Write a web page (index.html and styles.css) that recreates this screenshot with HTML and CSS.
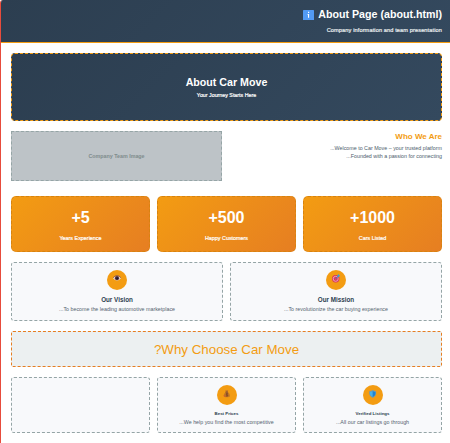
FILE: index.html
```html
<!DOCTYPE html>
<html lang="en">
<head>
<meta charset="utf-8">
<title>About Page</title>
<link rel="stylesheet" href="styles.css">
</head>
<body>
<div class="page">
  <header class="header">
    <h1 class="title">
      <svg class="info" viewBox="0 0 11 10"><rect width="11" height="10" rx=".6" fill="#529af3"/><path d="M5 1.7h1.2v1.2H5zM4.5 4h1.6v3.7H5V4.8h-.5z" fill="#fff"/></svg>
      <span>About Page (about.html)</span>
    </h1>
    <p class="subtitle">Company information and team presentation</p>
  </header>
  <main class="content">
    <section class="hero">
      <h2 class="hero-title">About Car Move</h2>
      <p class="hero-text">Your Journey Starts Here</p>
    </section>
    <section class="who">
      <div class="image">Company Team Image</div>
      <div class="who-copy">
        <h3 class="who-title">Who We Are</h3>
        <p>...Welcome to Car Move – your trusted platform</p>
        <p>...Founded with a passion for connecting</p>
      </div>
    </section>
    <section class="stats">
      <div class="stat"><b class="number">+5</b><span class="label">Years Experience</span></div>
      <div class="stat"><b class="number">+500</b><span class="label">Happy Customers</span></div>
      <div class="stat"><b class="number">+1000</b><span class="label">Cars Listed</span></div>
    </section>
    <section class="pair">
      <article class="card">
        <div class="circle"><svg viewBox="0 0 20 20"><path d="M6 8.3Q10 3.2 14 8.3Q10 12.7 6 8.3" fill="#e8e1e5"/><path d="M6.1 7.7Q10 3.2 14 7.7" fill="none" stroke="#875048" stroke-width=".7"/><circle cx="10" cy="8.2" r="2.1" fill="#572f3c"/><circle cx="10.2" cy="8.3" r="1" fill="#171b2c"/></svg></div>
        <h4>Our Vision</h4>
        <p>...To become the leading automotive marketplace</p>
      </article>
      <article class="card">
        <div class="circle"><svg viewBox="0 0 20 20"><circle cx="9.7" cy="8.8" r="3.7" fill="#d93458"/><circle cx="9.7" cy="8.8" r="2.5" fill="none" stroke="#efbdd0" stroke-width=".8"/><circle cx="9.7" cy="8.8" r="1" fill="#d94b78"/><path d="M9.8 8.7l2.8-2.8" stroke="#277ec1" stroke-width="1"/><path d="M11.4 6.8l.2-1.8 1.2-.9.3 1.1 1.1.3-1 1.3z" fill="#36a3da"/></svg></div>
        <h4>Our Mission</h4>
        <p>...To revolutionize the car buying experience</p>
      </article>
    </section>
    <h2 class="why">?Why Choose Car Move</h2>
    <section class="features">
      <article class="card"></article>
      <article class="card">
        <div class="circle"><svg viewBox="0 0 20 20"><path d="M8.3 5.3h3l-.6 1.8c1.3.8 2.5 2.7 2.2 4.1-.2 1.3-6 1.3-6.2 0-.2-1.6.9-3.3 2.2-4.1z" fill="#c47a25"/><path d="M8.5 7.1h2.4" stroke="#713e36" stroke-width=".8"/><path d="M11 8.6H9.2v1.2h1.6V11H8.7M9.9 8v3.5" fill="none" stroke="#76402e" stroke-width=".6"/><path d="M7 10.3l1.2 1.4" stroke="#df4c35" stroke-width=".9"/></svg></div>
        <h4>Best Prices</h4>
        <p>...We help you find the most competitive</p>
      </article>
      <article class="card">
        <div class="circle"><svg viewBox="0 0 20 20"><path d="M6.2 6.2Q8.6 6.1 9.8 5q1.3 1.1 3.3 1.2v2.7q-.3 2.7-3.3 4.1-3.1-1.4-3.6-4.1z" fill="#729aac"/><path d="M7 6.9q1.7-.1 2.7-1v6.2q-2.2-1.1-2.7-3.2z" fill="#42b2ed"/><path d="M9.7 5.9q1.1.9 2.7 1v2q-.4 2.1-2.7 3.2z" fill="#1b83d5"/></svg></div>
        <h4>Verified Listings</h4>
        <p>...All our car listings go through</p>
      </article>
    </section>
  </main>
</div>
</body>
</html>
```

FILE: styles.css
```css
* { box-sizing: border-box; }
body, h1, h2, h3, h4, p { margin: 0; }
body { background: #fff; font-family: "Liberation Sans", Arial, sans-serif; overflow: hidden; }
.page { height: 443px; border-left: 1px solid #e74c3c; border-top-left-radius: 3px; overflow: hidden; }
.header { height: 43px; padding: 8px 8px 0; border-bottom: 1px solid #f39c12; background: linear-gradient(135deg, #2c3e50, #34495e); color: #fff; text-align: right; }
.title { display: flex; align-items: center; justify-content: flex-end; gap: 4.5px; height: 13px; font-size: 10.67px; line-height: 13px; white-space: nowrap; }
.info { width: 11px; height: 10px; }
.subtitle { margin-top: 5px; font-size: 5.6px; line-height: 8px; letter-spacing: .12px; color: #ecf0f1; -webkit-text-stroke: .2px #ecf0f1; }
.content { display: flex; flex-direction: column; gap: 10px; padding: 10px 8px 0 10px; }
.hero { height: 68px; padding-top: 22px; border: 1px dashed #f39c12; border-radius: 4px; background: linear-gradient(135deg, #2c3e50, #34495e); color: #fff; text-align: center; }
.hero-title { font-size: 10.67px; line-height: 13px; }
.hero-text { margin-top: 3px; font-size: 5.3px; line-height: 7px; -webkit-text-stroke: .2px #fff; }
.who { display: grid; grid-template-columns: 211px 1fr; height: 50px; margin-bottom: 5px; }
.image { display: flex; align-items: center; justify-content: center; border: 1px dashed #95a5a6; background: #bdc3c7; color: #7f8c8d; font-size: 5.33px; font-weight: bold; }
.who-copy { text-align: right; color: #4c5c6b; font-size: 5.33px; line-height: 8px; }
.who-title { margin-bottom: 2px; color: #f39c12; font-size: 8px; line-height: 11px; }
.stats, .features { display: grid; grid-template-columns: repeat(3, 1fr); gap: 7px; height: 56px; }
.stat { display: flex; flex-direction: column; align-items: center; padding-top: 12px; border: 1px dashed #d78310; border-radius: 5px; background: linear-gradient(135deg, #f39c12, #e67e22) border-box; color: #fff; }
.number { font-size: 16px; line-height: 18px; }
.label { margin-top: 8px; font-size: 5.4px; line-height: 7px; -webkit-text-stroke: .2px #fff; }
.pair { display: grid; grid-template-columns: 1fr 1fr; gap: 7px; height: 59px; }
.card { padding-top: 7px; border: 1px dashed #95a5a6; border-radius: 3px; background: #f8f9fb; text-align: center; white-space: nowrap; }
.circle { width: 20px; height: 20px; margin: 0 auto; border-radius: 50%; background: #f39c12; }
.circle svg { display: block; width: 20px; height: 20px; }
.card h4 { margin-top: 6px; color: #2c3e50; font-size: 6.3px; line-height: 8px; }
.card p { margin-top: 1px; color: #55636f; font-size: 5.33px; line-height: 8px; }
.features .card h4 { margin-top: 5px; font-size: 4.4px; }
.features .card p { margin-top: 0; }
.why { height: 36px; border: 1px dashed #e67e22; border-radius: 2px; background: #ecf0f1; color: #f39c12; font-size: 13.33px; line-height: 35px; font-weight: normal; text-align: center; }
```
